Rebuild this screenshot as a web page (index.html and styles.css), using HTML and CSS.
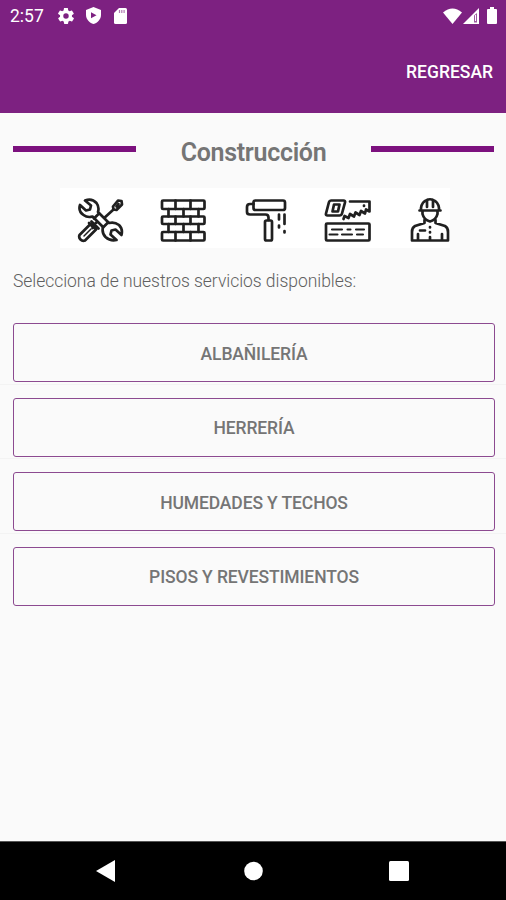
FILE: index.html
```html
<!DOCTYPE html>
<html lang="es">
<head>
    <meta charset="UTF-8">
    <meta name="viewport" content="width=device-width, initial-scale=1.0">
    <title>Construcción</title>
    <link rel="stylesheet" href="styles.css">
</head>
<body>
    <header class="header">
        <div class="status-bar">
            <span class="clock">2:57</span>
            <div class="status-left">
                <svg width="16" height="16" viewBox="2 2 20 20"><path fill="#fff" d="M19.4 13a7.500 7.500 0 0 0 0-2l2.100-1.600c.2-.2.3-.4.1-.7l-2-3.400c-.1-.2-.4-.3-.6-.2l-2.500 1a7.300 7.300 0 0 0-1.700-1l-.4-2.600c0-.3-.2-.5-.5-.5h-4c-.2 0-.4.2-.5.5l-.4 2.600a7.300 7.300 0 0 0-1.700 1l-2.500-1c-.2-.1-.5 0-.6.2l-2 3.400c-.1.2-.1.500.1.7L4.600 11a7.500 7.500 0 0 0 0 2l-2.100 1.600c-.2.2-.3.4-.1.7l2 3.400c.1.2.4.3.6.2l2.500-1a7.300 7.300 0 0 0 1.700 1l.4 2.600c0 .3.2.5.5.5h4c.2 0 .4-.2.5-.5l.4-2.600a7.300 7.300 0 0 0 1.700-1l2.500 1c.2.1.5 0 .6-.2l2-3.400c.1-.2.1-.5-.1-.7zM12 15.400a3.400 3.400 0 1 1 0-6.800 3.400 3.400 0 0 1 0 6.800z"/></svg>
                <svg width="15" height="17" viewBox="0 0 15 17"><path fill="#fff" d="M7.500 0 15 3v5c0 4.200-3.200 7.700-7.500 9C3.200 15.700 0 12.200 0 8V3z"/><path fill="#7d2181" d="M5 5.200v6l5.500-3z"/></svg>
                <svg width="13" height="16" viewBox="0 0 13 16"><path fill="#fff" d="M5 0h6.500Q13 0 13 1.500v13q0 1.500-1.500 1.500h-10Q0 16 0 14.500V5z"/><path stroke="#7d2181" stroke-opacity=".6" stroke-width="1.200" d="M5.500 2v3M7.800 2v3M10.100 2v3"/></svg>
            </div>
            <div class="status-right">
                <svg width="19" height="16" viewBox="0 0 19 16"><path fill="#fff" d="M0 4.500Q9.500-3.600 19 4.500L9.500 16z"/></svg>
                <svg width="16" height="16" viewBox="0 0 16 16"><path fill="#fff" d="M16 0v16H0z"/><path fill="#7d2181" d="M11 7.500 14 5v9.500h-3z" opacity=".75"/><path stroke="#fff" d="M12.500 7v6"/></svg>
                <svg class="battery" width="10" height="17" viewBox="0 0 10 17"><path fill="#fff" d="M3 0h4v2h2q1 0 1 1v13q0 1-1 1H1q-1 0-1-1V3q0-1 1-1h2z"/></svg>
            </div>
        </div>
        <div class="toolbar">
            <a class="back" href="#">REGRESAR</a>
        </div>
    </header>

    <main class="content">
        <div class="title-row">
            <span class="line"></span>
            <h1>Construcción</h1>
            <span class="line"></span>
        </div>

        <div class="icons">
            <!-- tools -->
            <svg viewBox="0 0 48 48">
                <path d="M36.500 13.500 25 24M16 31l-4-4M18 29.500l-2.500 2.500"/>
                <path d="m36 10.500 5-6 3.500.5.500 3.500-5.500 5.500-3-.5zM39.500 10.500l2-2.500"/>
                <path d="m2.500 39 11-11 5.500 5.500-11 11q-2.500 1-4.500-1t-1-4.500zM14.500 25.500l7 7M18 28l3-3"/>
                <path stroke-width="1.500" d="M7 40l7-7"/>
                <path fill="#fff" d="M8 4.500q7-2.500 11.500 2.500 3 4 1.500 9L32 27q5.500-1.500 10 2 4 4 2.500 10l-6-5.500-4 1-1 4 6 5.500q-6 1.500-11-3-4-4-2.500-10L15.500 20.500q-5 1.500-9-1.500Q1 15 3 9l6 5.500 4-1 1-4z"/>
                <path d="m22 17.500-5 5M31 26.500l-5 5"/>
            </svg>
            <!-- bricks -->
            <svg viewBox="0 0 48 48">
                <path d="M4 4.500h40.500q1 0 1 1v6.500q0 1-1 1H4q-1 0-1-1V5.500q0-1 1-1zM4 20.500h40.500q1 0 1 1V27q0 1-1 1H4q-1 0-1-1v-5.500q0-1 1-1zM4 36h40.500q1 0 1 1v6.500q0 1-1 1H4q-1 0-1-1V37q0-1 1-1z"/>
                <path d="M16.500 4.500V13M31.500 4.500V13M9.500 13v7.500M24.500 13v7.500M39.500 13v7.500M16.500 20.500V28M31.500 20.500V28M9.500 28v8M24.500 28v8M39.500 28v8M16.500 36v8.500M31.500 36v8.500"/>
            </svg>
            <!-- paint roller -->
            <svg viewBox="0 0 48 48">
                <rect x="12.500" y="4.500" width="31.500" height="9.500" rx="2"/>
                <path d="M12.500 8H9q-3 0-3 3v5q0 2.500 3 2.500h15.500q3 0 3 3V24"/>
                <rect x="24" y="24.500" width="7" height="20" rx="1.500"/>
                <path d="M38 18.500v5M38 29.500v2M43.500 18.500V28M43.500 35v1.500"/>
            </svg>
            <!-- saw and board -->
            <svg viewBox="0 0 48 48">
                <path d="M8 4.500h12.500q2 0 1.500 2L19 17.500q-.5 2-2.500 2H4.500q-2 0-1.500-2L6 6q.4-1.500 2-1.500z"/>
                <path d="M11 8.500h5.500L15 15.500H9.500z"/>
                <path d="M27 5.500h19.500v10l-3.500-2-1 4-4-2.500-1.500 4-4-2.500-1.500 4-4-2.500-1.500 4-4-2-1 3M41 9.500v.5"/>
                <rect x="3" y="27.500" width="43.500" height="17" rx="1"/>
                <path stroke-width="2.100" d="M9 33.500h10M24.500 33.500h3M33 33.500h8M6.500 38.500h8M19 38.500h10M34 38.500h6"/>
            </svg>
            <!-- worker -->
            <svg viewBox="0 0 48 48">
                <path d="M14.500 14.500h21M16 14V12q1-6.500 6-8v7M34 14V12q-1-6.500-6-8v7M22 4q3-1.500 6 0M17.500 15v3Q19 24 25 25.500 31 24 32.500 18v-3"/>
                <path d="M19.500 24v3L10 30q-3 1.500-3 6v8.500h36V36q0-4.500-3-6l-9.500-3v-3M13 44v-6M37 44v-6M15 34.500h5M25 31v.5M25 36v.5M25 41v3"/>
            </svg>
        </div>

        <p class="hint">Selecciona de nuestros servicios disponibles:</p>

        <ul class="services">
            <li><button>ALBAÑILERÍA</button></li>
            <li><button>HERRERÍA</button></li>
            <li><button>HUMEDADES Y TECHOS</button></li>
            <li><button>PISOS Y REVESTIMIENTOS</button></li>
        </ul>
    </main>

    <nav class="nav-bar">
        <svg width="20" height="22" viewBox="0 0 20 22"><path fill="#fff" d="M19 0v22L0 11z"/></svg>
        <svg width="20" height="20" viewBox="0 0 20 20"><circle cx="10.500" cy="10" r="9.300" fill="#fff"/></svg>
        <svg width="20" height="20" viewBox="0 0 20 20"><rect width="20" height="20" rx="1.500" fill="#fff"/></svg>
    </nav>
</body>
</html>
```

FILE: styles.css
```css
* {
    box-sizing: border-box;
}
body {
    margin: 0;
    height: 900px;
    display: flex;
    flex-direction: column;
    background: #fafafa;
    font-family: Roboto, sans-serif;
    color: #757575;
    overflow: hidden;
}
svg {
    display: block;
    flex: none;
}
.header {
    height: 113px;
    background: #7d2181;
    color: #fff;
}
.status-bar {
    height: 31px;
    display: flex;
    align-items: center;
    padding: 0 9px 0 10px;
}
.clock {
    width: 48px;
    font-size: 17.5px;
}
.status-left {
    display: flex;
    align-items: center;
    gap: 12px;
}
.status-left svg:last-child {
    margin-left: 1px;
}
.status-right {
    display: flex;
    align-items: center;
    gap: 1px;
    margin-left: auto;
}
.battery {
    margin-left: 7px;
}
.toolbar {
    height: 82px;
    display: flex;
    align-items: center;
    justify-content: flex-end;
    padding-right: 13px;
}
.back {
    color: #fff;
    font-size: 17.5px;
    font-weight: 500;
    text-decoration: none;
}
.content {
    flex: 1;
}
.title-row {
    height: 75px;
    display: flex;
    align-items: center;
    justify-content: space-between;
    padding: 3px 12px 0 13px;
}
.title-row h1 {
    margin: 0;
    font-size: 25px;
    font-weight: 600;
    letter-spacing: -0.3px;
}
.line {
    width: 123px;
    height: 6px;
    margin-bottom: 6px;
    background: #7c117e;
}
.icons {
    width: 390px;
    height: 60px;
    margin-left: 60px;
    padding: 8px 0 0 17px;
    display: flex;
    gap: 34px;
    background: #fff;
}
.icons svg {
    width: 48px;
    height: 48px;
    fill: none;
    stroke: #202020;
    stroke-width: 2.7;
    stroke-linecap: round;
    stroke-linejoin: round;
}
.hint {
    margin: 0;
    height: 62px;
    padding: 22px 13px 0;
    font-size: 17.5px;
    font-weight: 300;
    line-height: 22px;
    letter-spacing: -0.04px;
    color: #606060;
}
.services {
    margin: 0;
    padding: 0;
    list-style: none;
}
.services li {
    height: 74.6px;
    padding: 13px 11px 2px 13px;
    border-bottom: 1px solid #f3f3f3;
}
.services li:last-child {
    border-bottom: none;
}
.services button {
    display: block;
    width: 100%;
    height: 59px;
    padding: 2px 0 0;
    border: 1.5px solid #8c4a90;
    border-radius: 3px;
    background: transparent;
    font-family: inherit;
    font-size: 17.5px;
    font-weight: 500;
    letter-spacing: -0.12px;
    color: #757575;
}
.nav-bar {
    height: 59px;
    display: flex;
    align-items: center;
    justify-content: space-between;
    padding: 0 97px 0 96px;
    border-top: 1px solid #555;
    background: #000;
}
```
